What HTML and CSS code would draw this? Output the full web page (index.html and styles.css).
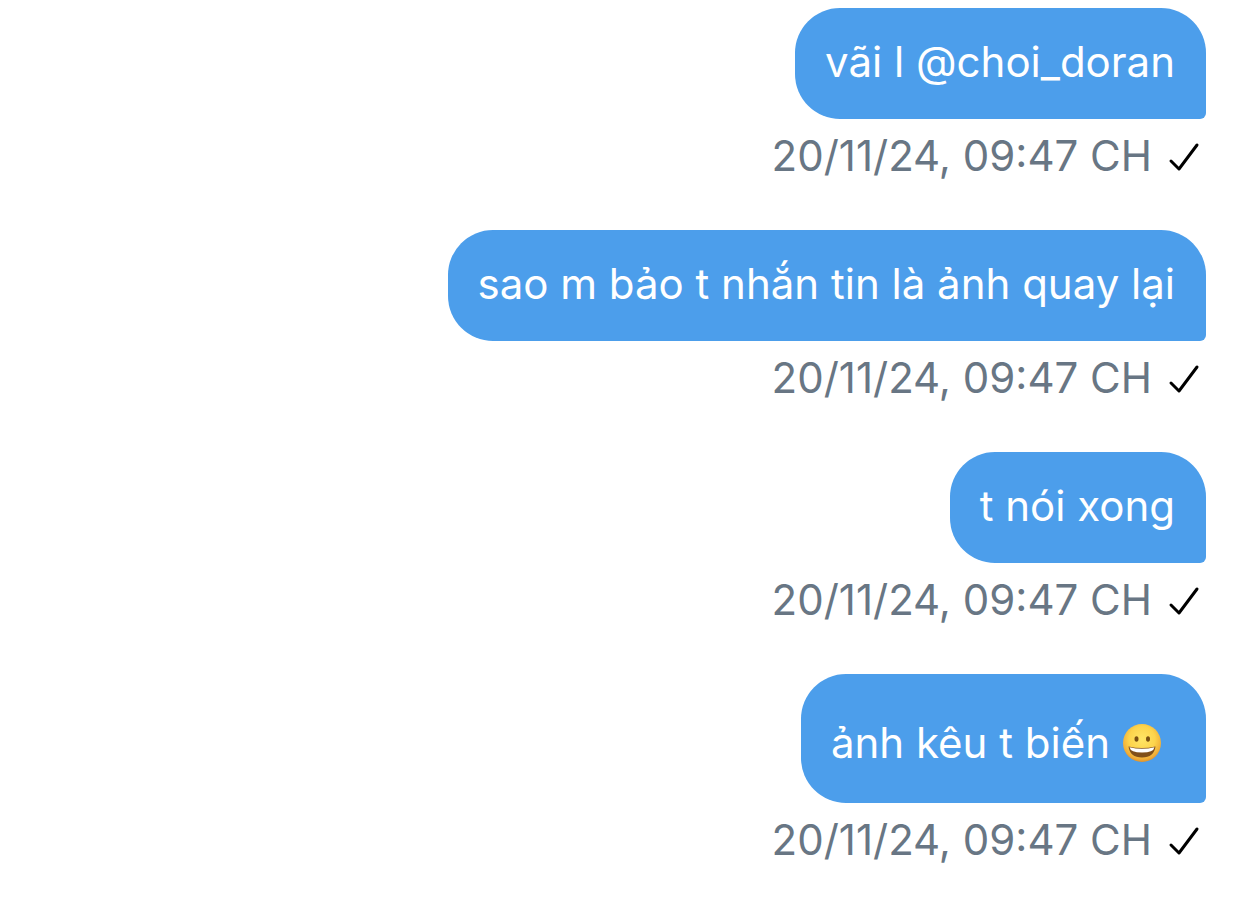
FILE: index.html
```
<!DOCTYPE html>
<html lang="vi">
<head>
<meta charset="UTF-8">
<meta name="viewport" content="width=device-width, initial-scale=1.0">
<title>Messages</title>
<link rel="stylesheet" href="styles.css">
</head>
<body>

<main class="chat">
    <div class="message">
        <div class="bubble">vãi l @choi_doran</div>
        <div class="meta">
            <span>20/11/24, 09:47 CH</span>
            <svg class="check" viewBox="0 0 32 32"><path d="M3 21 L11 29 L29 5"/></svg>
        </div>
    </div>
    <div class="message">
        <div class="bubble">sao m bảo t nhắn tin là ảnh quay lại</div>
        <div class="meta">
            <span>20/11/24, 09:47 CH</span>
            <svg class="check" viewBox="0 0 32 32"><path d="M3 21 L11 29 L29 5"/></svg>
        </div>
    </div>
    <div class="message">
        <div class="bubble">t nói xong</div>
        <div class="meta">
            <span>20/11/24, 09:47 CH</span>
            <svg class="check" viewBox="0 0 32 32"><path d="M3 21 L11 29 L29 5"/></svg>
        </div>
    </div>
    <div class="message">
        <div class="bubble bubble-emoji">
            <span>ảnh kêu t biến</span>
            <svg class="emoji" viewBox="0 0 40 40">
                <defs>
                    <radialGradient id="face" cx="50%" cy="40%" r="62%">
                        <stop offset="0" stop-color="#ffe566"/>
                        <stop offset="0.55" stop-color="#fdd44c"/>
                        <stop offset="0.85" stop-color="#f0ae38"/>
                        <stop offset="1" stop-color="#d8892a"/>
                    </radialGradient>
                </defs>
                <circle cx="20" cy="20" r="19" fill="url(#face)"/>
                <ellipse cx="14.5" cy="16" rx="2" ry="2.8" fill="#7a4f12"/>
                <ellipse cx="26" cy="16" rx="2" ry="2.8" fill="#7a4f12"/>
                <path d="M6.5 23.5 Q20 26.5 33.5 23.5 Q32 34.5 20 34.5 Q8 34.5 6.5 23.5Z" fill="#80501a"/>
                <path d="M7.5 24.2 Q20 27.5 32.5 24.2 Q31.5 29.5 20 29.5 Q8.500 29.5 7.5 24.2Z" fill="#fff"/>
            </svg>
        </div>
        <div class="meta">
            <span>20/11/24, 09:47 CH</span>
            <svg class="check" viewBox="0 0 32 32"><path d="M3 21 L11 29 L29 5"/></svg>
        </div>
    </div>
</main>

</body>
</html>
```
FILE: styles.css
```
body {
    margin: 0;
    background-color: #fff;
    font-family: Inter, "Noto Sans", sans-serif;
    font-size: 42px;
}
.chat {
    display: flex;
    flex-direction: column;
    gap: 48px;
    padding: 8px 36px 0;
}
.message {
    display: flex;
    flex-direction: column;
    align-items: flex-end;
}
.bubble {
    padding: 27px 31px 30px 30px;
    line-height: 54px;
    color: #fff;
    background-color: #4c9eeb;
    border-radius: 45px 45px 6px 45px;
}
.bubble-emoji {
    display: flex;
    align-items: center;
    gap: 12px;
    padding: 42px 44px 33px 30px;
}
.emoji {
    width: 40px;
    height: 40px;
}
.meta {
    display: flex;
    align-items: center;
    gap: 16px;
    padding: 10px 6px 0 0;
    line-height: 53px;
    color: #687684;
}
.check {
    width: 32px;
    height: 32px;
    fill: none;
    stroke: #000;
    stroke-width: 3;
    stroke-linecap: round;
    stroke-linejoin: round;
}
```
